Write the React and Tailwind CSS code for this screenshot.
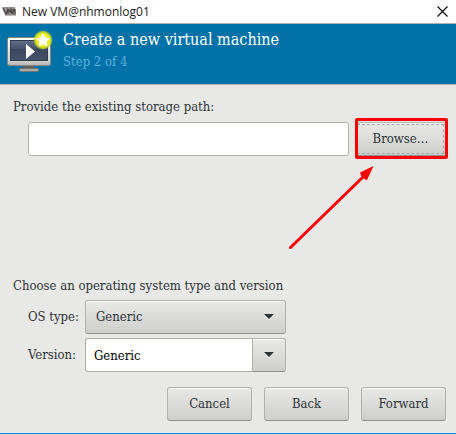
import React from "react";

const buttonFace =
  "border border-[#b1b1ae] border-b-[#8f8f8c] rounded-[3px] bg-linear-to-b from-[#e9e9e8] to-[#cececd] shadow-[inset_0_1px_0_#fafafa] text-[#2e3436]";

function VmLogo() {
  return (
    <svg width="15" height="9" viewBox="0 0 15 9" aria-hidden="true">
      <path d="M0 0h13l1 8H3z" fill="#9a9494" />
      <path d="M1 1l3 6 2-5M6 7V2l2 3 1-3 1 5M11 7V2l1 2 1-2v5" fill="none" stroke="#4d4648" strokeWidth="1.2" />
      <path d="M3 8h11" stroke="#7d7677" />
    </svg>
  );
}

function MonitorIcon() {
  return (
    <svg width="48" height="48" viewBox="0 -1 48 48" aria-hidden="true">
      <defs>
        <linearGradient id="frame" x1="0" y1="0" x2="0" y2="1">
          <stop offset="0" stopColor="#ffffff" />
          <stop offset="0.8" stopColor="#d5d5d3" />
          <stop offset="1" stopColor="#b4b4b1" />
        </linearGradient>
        <linearGradient id="screen" x1="0" y1="0" x2="0" y2="1">
          <stop offset="0" stopColor="#66728a" />
          <stop offset="0.4" stopColor="#465269" />
          <stop offset="0.45" stopColor="#3b475b" />
          <stop offset="1" stopColor="#46526a" />
        </linearGradient>
        <radialGradient id="glow">
          <stop offset="0" stopColor="#fff86a" />
          <stop offset="0.65" stopColor="#ecec20" />
          <stop offset="0.85" stopColor="#c8d820" stopOpacity="0.75" />
          <stop offset="1" stopColor="#a8c820" stopOpacity="0" />
        </radialGradient>
      </defs>
      <path d="M18 36h11v4H18z" fill="#5d605c" />
      <rect x="14.500" y="39.500" width="19" height="3" rx="1" fill="#a9aaa7" stroke="#747672" />
      <rect x="2.500" y="8.500" width="43" height="28" rx="2" fill="url(#frame)" stroke="#858782" />
      <rect x="5.500" y="11.500" width="37" height="20" fill="url(#screen)" stroke="#303b4b" />
      <path d="M21 15v15l9-7.500z" fill="#fff" />
      <circle cx="38" cy="11" r="10" fill="url(#glow)" />
      <path
        d="M38 5l2 4 4.500 0.500-3.500 3 1 4.500-4-2.500-4 2.500 1-4.500-3.500-3L36 9z"
        fill="#fff"
        stroke="#fff"
        strokeLinejoin="round"
      />
    </svg>
  );
}

function Caret() {
  return (
    <svg width="10" height="6" viewBox="0 0 10 6" aria-hidden="true">
      <path d="M0 0h10L5 5z" fill="#2e3436" />
      <path d="M0 1l5 5 5-5" fill="none" stroke="#fff" strokeOpacity="0.5" />
    </svg>
  );
}

function DialogButton({ children }) {
  return (
    <button type="button" className={`h-[34px] w-[85px] ${buttonFace}`}>
      {children}
    </button>
  );
}

export default function App() {
  return (
    <div className="flex min-h-screen flex-col border-b border-[#cfd3d6] bg-[#e8e8e7] font-['DejaVu_Serif_Condensed','DejaVu_Serif',serif] text-[13px] leading-5 text-[#2e3436]">
      <div className="flex h-[23px] items-center bg-white pl-[2px] pr-2 text-[#222222]">
        <VmLogo />
        <span className="ml-[5px] grow font-['Open_Sans','Noto_Sans',sans-serif] text-[12px] leading-4">
          New VM@nhmonlog01
        </span>
        <button type="button" aria-label="Close">
          <svg width="11" height="11" viewBox="0 0 11 11" aria-hidden="true">
            <path d="M0.500 0.500l10 10M10.500 0.500l-10 10" stroke="#000" strokeWidth="1.100" />
          </svg>
        </button>
      </div>

      <header className="flex h-[62px] items-start gap-[10px] border-y border-[#aeb2ad] bg-[#0072a8] pt-1 pl-[5px]">
        <MonitorIcon />
        <div>
          <h1 className="text-[16px] leading-6 text-white">Create a new virtual machine</h1>
          <p className="text-[#5fb0dd]">Step 2 of 4</p>
        </div>
      </header>

      <main className="flex grow flex-col border-b border-[#1a86db] pt-3 pr-[10px] pb-3 pl-[13px]">
        <label htmlFor="path">Provide the existing storage path:</label>
        <div className="mt-[5px] flex gap-[6px] pl-[15px]">
          <input
            id="path"
            type="text"
            className="h-[34px] min-w-0 grow rounded-[3px] border border-[#b1b1ae] bg-white px-2 text-black"
          />
          <div className="relative">
            <button type="button" className={`h-[34px] w-[91px] p-px ${buttonFace}`}>
              <span className="flex h-full items-center justify-center border border-dashed border-[#a2a2a0]">
                Browse…
              </span>
            </button>
            <div className="pointer-events-none absolute -top-1 right-[-2px] bottom-[-3px] left-0 rounded-[2px] border-3 border-[#ff0000]" />
            <svg
              className="pointer-events-none absolute top-[43px] left-[-67px]"
              width="88"
              height="86"
              viewBox="0 0 88 86"
              aria-hidden="true"
            >
              <path d="M2.500 82.500L75 12" stroke="#ff0000" strokeWidth="3" strokeLinecap="round" />
              <path d="M85.500 1L72 7.500l1 3 4 4 2 0.500z" fill="#ff0000" />
            </svg>
          </div>
        </div>

        <section className="mt-auto">
          <h2>Choose an operating system type and version</h2>
          <div className="mt-1 grid grid-cols-[50px_201px] items-center gap-x-[7px] gap-y-1 pl-[15px] whitespace-nowrap">
            <label htmlFor="os">OS type:</label>
            <div className="relative">
              <select id="os" className={`h-[34px] w-full appearance-none pl-[10px] ${buttonFace}`}>
                <option>Generic</option>
              </select>
              <span className="pointer-events-none absolute inset-y-0 right-3 flex items-center">
                <Caret />
              </span>
            </div>
            <label htmlFor="version">Version:</label>
            <div className="flex">
              <input
                id="version"
                type="text"
                defaultValue="Generic"
                className="h-[34px] min-w-0 grow rounded-l-[3px] border border-r-0 border-[#b1b1ae] bg-white px-2 text-black"
              />
              <button
                type="button"
                aria-label="Show versions"
                className={`flex h-[34px] w-[34px] items-center justify-center rounded-l-none ${buttonFace}`}
              >
                <Caret />
              </button>
            </div>
          </div>
        </section>

        <footer className="mt-[15px] flex justify-end gap-3">
          <DialogButton>Cancel</DialogButton>
          <DialogButton>Back</DialogButton>
          <DialogButton>Forward</DialogButton>
        </footer>
      </main>
    </div>
  );
}
